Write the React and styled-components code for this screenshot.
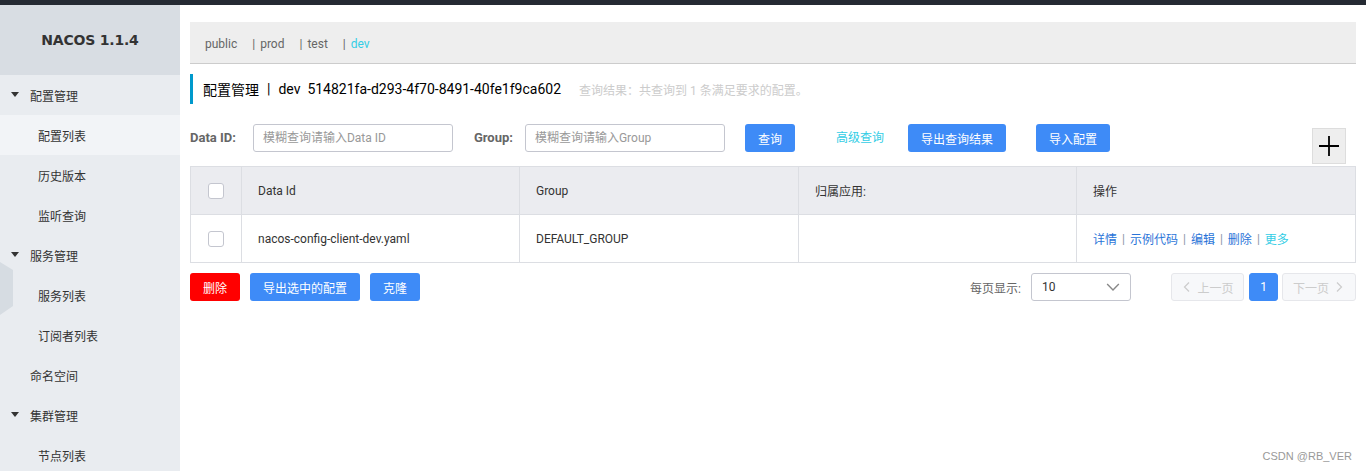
import React from 'react';
import styled, { createGlobalStyle } from 'styled-components';

const GlobalStyle = createGlobalStyle`
  html, body {
    margin: 0;
    padding: 0;
    background: #fff;
    font-family: Roboto, "Noto Sans CJK SC", sans-serif;
    font-size: 12px;
    color: #333;
  }
`

const Page = styled.div`
  position: relative;
  width: 1366px;
  height: 471px;
  overflow: hidden;
  display: flex;
  flex-direction: column;
`

const TopBar = styled.div`
  flex-shrink: 0;
  height: 5px;
  background: #252a33;
`

const Body = styled.div`
  flex: 1;
  min-height: 0;
  display: flex;
`

const Sidebar = styled.div`
  position: relative;
  width: 180px;
  flex-shrink: 0;
  background: #e9ecf0;
  display: flex;
  flex-direction: column;
`

const Logo = styled.div`
  flex-shrink: 0;
  height: 70px;
  background: #d8dde3;
  display: flex;
  align-items: center;
  justify-content: center;
  font-weight: bold;
  font-size: 14px;
  color: #333;
  font-family: "DejaVu Sans", "Noto Sans CJK SC", sans-serif;
  letter-spacing: -0.2px;
`

const MenuItem = styled.div`
  flex-shrink: 0;
  height: 40px;
  display: flex;
  align-items: center;
  padding-left: ${p => (p.child ? 38 : 30)}px;
  background: ${p => (p.active ? '#f2f4f7' : 'transparent')};
  color: #333;
  font-size: 12px;
  position: relative;
`

const Caret = styled.span`
  position: absolute;
  left: 11px;
  top: 17px;
  width: 0;
  height: 0;
  border-left: 4px solid transparent;
  border-right: 4px solid transparent;
  border-top: 5px solid #333;
`

const Toggle = styled.svg`
  position: absolute;
  left: 0;
  top: 257px;
`

const Main = styled.div`
  flex: 1;
  padding: 17px 10px 0 10px;
  display: flex;
  flex-direction: column;
`

const NsBar = styled.div`
  box-sizing: border-box;
  height: 42px;
  padding-top: 3px;
  background: #eee;
  border-bottom: 1px solid #ccc;
  display: flex;
  align-items: center;
  padding-left: 15px;
  font-size: 12px;
`

const NsItem = styled.span`
  color: ${p => (p.active ? '#33cde5' : '#666')};
  margin-right: 15px;
`

const NsSep = styled.span`
  color: #666;
  margin-right: 5px;
`

const TitleRow = styled.div`
  margin-top: 10px;
  height: 30px;
  border-left: 3px solid #09c;
  padding-left: 10px;
  display: flex;
  align-items: center;
  font-size: 14px;
  color: #000;
`

const TitleSep = styled.span`
  margin: 0 8px;
`

const TitleHint = styled.span`
  color: #ccc;
  font-size: 12px;
  margin-left: 18px;
`

const SearchRow = styled.div`
  margin-top: 20px;
  display: flex;
  align-items: flex-start;
`

const Label = styled.label`
  height: 28px;
  line-height: 28px;
  font-weight: bold;
  color: #666;
  font-size: 13px;
  margin-right: ${p => p.gap}px;
  margin-left: ${p => p.left || 0}px;
`

const Input = styled.div`
  box-sizing: border-box;
  width: 200px;
  height: 28px;
  border: 1px solid #c4c6cf;
  border-radius: 3px;
  padding-left: 9px;
  line-height: 26px;
  color: #999;
  font-size: 12px;
`

const Button = styled.button`
  box-sizing: border-box;
  height: 28px;
  padding: 0 ${p => p.px || 16}px;
  margin-left: ${p => p.ml || 0}px;
  border: none;
  border-radius: 3px;
  background: ${p => (p.danger ? '#ff0000' : '#3e8bf7')};
  color: #fff;
  font-size: 12px;
  font-family: inherit;
  cursor: pointer;
`

const LinkBtn = styled.span`
  height: 28px;
  line-height: 28px;
  color: #33cde5;
  margin-left: 41px;
  margin-right: 24px;
`

const PlusBtn = styled.div`
  box-sizing: border-box;
  margin-left: auto;
  margin-right: 10px;
  margin-top: 4px;
  width: 34px;
  height: 36px;
  background: #eee;
  border: 1px solid #ddd;
  display: flex;
  align-items: center;
  justify-content: center;
`

const Table = styled.div`
  margin-top: 2px;
  border: 1px solid #dcdee3;
  border-bottom: none;
`

const Row = styled.div`
  display: grid;
  grid-template-columns: 50px 278px 279px 278px 1fr;
  height: 47px;
  border-bottom: 1px solid #dcdee3;
  background: ${p => (p.head ? '#ebecf0' : '#fff')};
`

const Cell = styled.div`
  display: flex;
  align-items: center;
  padding-left: ${p => (p.center ? 0 : 16)}px;
  justify-content: ${p => (p.center ? 'center' : 'flex-start')};
  border-left: ${p => (p.first ? 'none' : '1px solid #dcdee3')};
  color: #333;
  font-size: 12px;
`

const Check = styled.span`
  box-sizing: border-box;
  width: 16px;
  height: 16px;
  border: 1px solid #c4c6cf;
  border-radius: 3px;
  background: #fff;
`

const OpLink = styled.a`
  color: ${p => (p.more ? '#33cde5' : '#2a74d8')};
  text-decoration: none;
`

const OpSep = styled.span`
  color: #8a96a8;
  margin: 0 5px;
`

const Footer = styled.div`
  margin-top: 10px;
  display: flex;
  align-items: center;
`

const PageLabel = styled.span`
  margin-left: auto;
  color: #666;
  margin-right: 10px;
`

const Select = styled.div`
  box-sizing: border-box;
  width: 100px;
  height: 28px;
  border: 1px solid #c4c6cf;
  border-radius: 3px;
  display: flex;
  align-items: center;
  justify-content: space-between;
  padding: 0 10px;
  color: #333;
  margin-right: 40px;
`

const PageBtn = styled.div`
  box-sizing: border-box;
  height: 28px;
  width: ${p => p.w}px;
  margin-left: ${p => p.ml || 0}px;
  border-radius: 3px;
  display: flex;
  align-items: center;
  justify-content: center;
  gap: 4px;
  background: ${p => (p.current ? '#3e8bf7' : '#f7f8fa')};
  border: 1px solid ${p => (p.current ? '#3e8bf7' : '#e6e7eb')};
  color: ${p => (p.current ? '#fff' : '#ccc')};
  font-size: 12px;
`

const Watermark = styled.div`
  position: absolute;
  right: 14px;
  bottom: 9px;
  font-size: 11px;
  color: #999;
  font-family: "Liberation Sans", Arial, sans-serif;
`

const Chevron = ({ dir, color = '#ccc', size = 12 }) => (
  <svg width={size} height={size} viewBox="0 0 12 12" fill="none" stroke={color} strokeWidth="1.2">
    {dir === 'left' && <path d="M8 1.5 3.5 6 8 10.5" />}
    {dir === 'right' && <path d="M4 1.5 8.5 6 4 10.5" />}
    {dir === 'down' && <path d="M1 3.5 6 8.5 11 3.5" />}
  </svg>
)

const menu = [
  { label: '配置管理', parent: true },
  { label: '配置列表', child: true, active: true },
  { label: '历史版本', child: true },
  { label: '监听查询', child: true },
  { label: '服务管理', parent: true },
  { label: '服务列表', child: true },
  { label: '订阅者列表', child: true },
  { label: '命名空间' },
  { label: '集群管理', parent: true },
  { label: '节点列表', child: true },
]

const ops = ['详情', '示例代码', '编辑', '删除']

export default function App() {
  return (
    <Page>
      <GlobalStyle />
      <TopBar />
      <Body>
        <Sidebar>
          <Logo>NACOS 1.1.4</Logo>
          {menu.map(m => (
            <MenuItem key={m.label} child={m.child} active={m.active}>
              {m.parent && <Caret />}
              {m.label}
            </MenuItem>
          ))}
          <Toggle width="14" height="54" viewBox="0 0 14 54">
            <polygon points="0,0 13,8 13,44 0,53" fill="#d6dce2" />
          </Toggle>
        </Sidebar>
        <Main>
          <NsBar>
            <NsItem>public</NsItem>
            <NsSep>|</NsSep><NsItem>prod</NsItem>
            <NsSep>|</NsSep><NsItem>test</NsItem>
            <NsSep>|</NsSep><NsItem active>dev</NsItem>
          </NsBar>
          <TitleRow>
            配置管理<TitleSep>|</TitleSep>dev&nbsp;&nbsp;514821fa-d293-4f70-8491-40fe1f9ca602
            <TitleHint>查询结果：共查询到 1 条满足要求的配置。</TitleHint>
          </TitleRow>
          <SearchRow>
            <Label gap={17}>Data ID:</Label>
            <Input>模糊查询请输入Data ID</Input>
            <Label gap={12} left={21}>Group:</Label>
            <Input>模糊查询请输入Group</Input>
            <Button ml={20} px={13}>查询</Button>
            <LinkBtn>高级查询</LinkBtn>
            <Button px={13}>导出查询结果</Button>
            <Button ml={30} px={13}>导入配置</Button>
            <PlusBtn>
              <svg width="22" height="22" viewBox="0 0 22 22">
                <path d="M11 1v20M1 11h20" stroke="#000" strokeWidth="1.8" />
              </svg>
            </PlusBtn>
          </SearchRow>
          <Table>
            <Row head>
              <Cell first center><Check /></Cell>
              <Cell>Data Id</Cell>
              <Cell>Group</Cell>
              <Cell>归属应用:</Cell>
              <Cell>操作</Cell>
            </Row>
            <Row>
              <Cell first center><Check /></Cell>
              <Cell>nacos-config-client-dev.yaml</Cell>
              <Cell>DEFAULT_GROUP</Cell>
              <Cell />
              <Cell>
                {ops.map(o => (
                  <React.Fragment key={o}>
                    <OpLink href="#">{o}</OpLink>
                    <OpSep>|</OpSep>
                  </React.Fragment>
                ))}
                <OpLink href="#" more>更多</OpLink>
              </Cell>
            </Row>
          </Table>
          <Footer>
            <Button danger px={13}>删除</Button>
            <Button ml={10} px={13}>导出选中的配置</Button>
            <Button ml={10} px={13}>克隆</Button>
            <PageLabel>每页显示:</PageLabel>
            <Select>
              10
              <Chevron dir="down" color="#888" size={14} />
            </Select>
            <PageBtn w={73}><Chevron dir="left" />上一页</PageBtn>
            <PageBtn w={29} ml={5} current>1</PageBtn>
            <PageBtn w={74} ml={4}>下一页<Chevron dir="right" /></PageBtn>
          </Footer>
        </Main>
      </Body>
      <Watermark>CSDN @RB_VER</Watermark>
    </Page>
  )
}
